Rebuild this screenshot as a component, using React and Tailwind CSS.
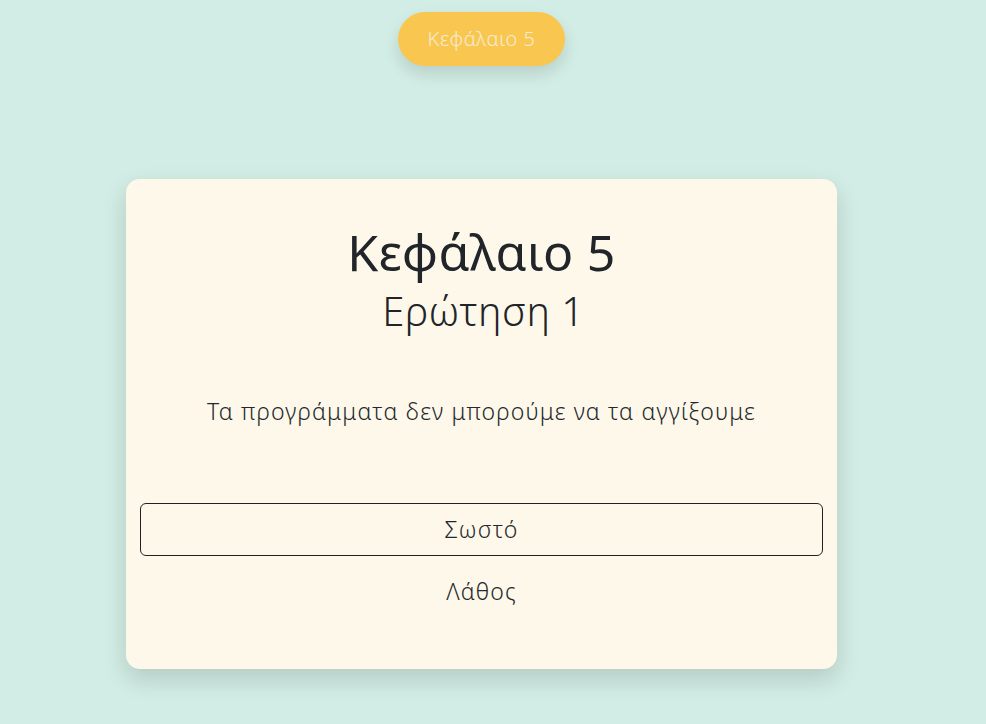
import React from 'react';

const answers = [
  { label: 'Σωστό', selected: true },
  { label: 'Λάθος', selected: false },
];

export default function App() {
  return (
    <div className="min-h-screen bg-[#d2ede5] font-['Noto_Sans',sans-serif] text-[#212529]">
      <div className="w-[963px] flex flex-col items-center">
        <button className="mt-[12px] h-[54px] px-[30px] rounded-full bg-[#f9c74f] text-[#f6ead6] text-[20px] font-light tracking-[0.5px] shadow-[0_8px_16px_rgba(0,0,0,0.12)]">
          Κεφάλαιο 5
        </button>

        <div className="mt-[113px] w-[711px] h-[490px] rounded-[14px] bg-[#fef8ea] shadow-[0_10px_25px_rgba(0,0,0,0.15)] px-[14px] pt-[43px] flex flex-col items-center">
          <h1 className="text-[50px] leading-[60px] font-normal tracking-[0.3px]">Κεφάλαιο 5</h1>
          <h2 className="mt-[5px] ml-[4px] text-[40px] leading-[48px] font-light tracking-[0.5px]">Ερώτηση 1</h2>

          <p className="mt-[60px] text-[23px] leading-[32px] font-light tracking-[1.15px] text-[#24282c]">
            Τα προγράμματα δεν μπορούμε να τα αγγίξουμε
          </p>

          <div className="mt-[76px] w-full flex flex-col gap-[9px]">
            {answers.map((a) => (
              <button
                key={a.label}
                className={`w-full h-[53px] rounded-[6px] text-[23px] font-light tracking-[1.2px] text-[#24282c] border ${a.selected ? 'border-[#222]' : 'border-transparent'}`}
              >
                {a.label}
              </button>
            ))}
          </div>
        </div>
      </div>
    </div>
  );
}
